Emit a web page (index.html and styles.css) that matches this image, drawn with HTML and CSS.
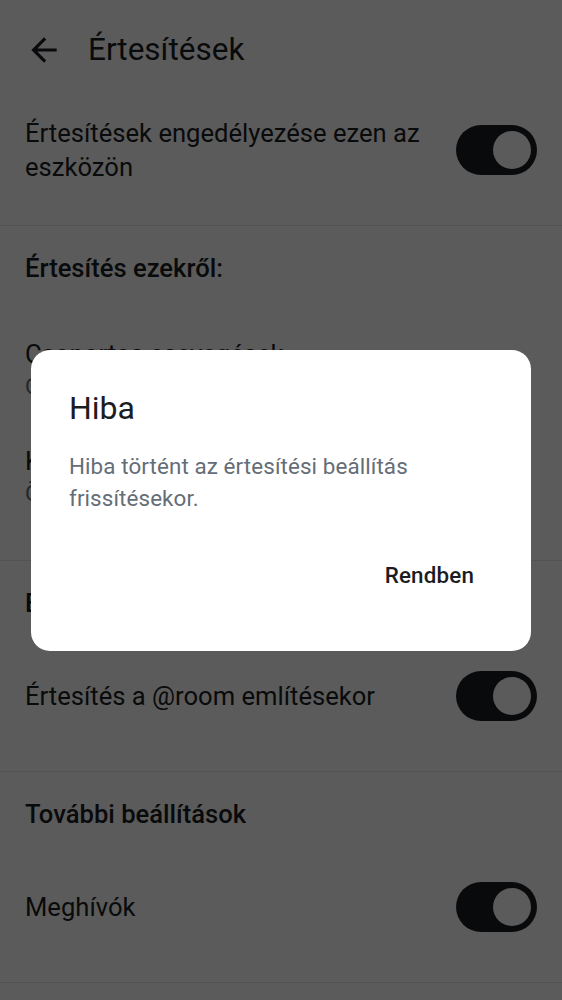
FILE: index.html
```html
<!DOCTYPE html>
<html lang="hu">
<head>
<meta charset="utf-8">
<title>Értesítések</title>
<link rel="stylesheet" href="styles.css">
</head>
<body>
<div class="screen">
  <header class="appbar">
    <span class="nav-icon">
      <svg viewBox="0 0 24 24" aria-hidden="true"><path d="M20 11H7.83l5.59-5.59L12 4l-8 8 8 8 1.41-1.41L7.83 13H20v-2z"/></svg>
    </span>
    <h1 class="appbar-title">Értesítések</h1>
  </header>

  <section class="section section-first">
    <div class="row row-toggle row-first">
      <span class="row-title">Értesítések engedélyezése ezen az eszközön</span>
      <span class="switch"><span class="thumb"></span></span>
    </div>
  </section>

  <section class="section">
    <h2 class="section-header">Értesítés ezekről:</h2>
    <div class="row row-two">
      <div class="row-title">Csoportos csevegések</div>
      <div class="row-sub">Csak említések és kulcsszavak</div>
    </div>
    <div class="row row-two">
      <div class="row-title">Közvetlen csevegések</div>
      <div class="row-sub">Összes üzenet</div>
    </div>
  </section>

  <section class="section">
    <h2 class="section-header">Említések</h2>
    <div class="row row-toggle">
      <span class="row-title">Értesítés a @room említésekor</span>
      <span class="switch"><span class="thumb"></span></span>
    </div>
  </section>

  <section class="section">
    <h2 class="section-header">További beállítások</h2>
    <div class="row row-toggle">
      <span class="row-title">Meghívók</span>
      <span class="switch"><span class="thumb"></span></span>
    </div>
  </section>
</div>

<div class="scrim">
  <div class="dialog" role="alertdialog" aria-labelledby="dlg-title">
    <h2 class="dialog-title" id="dlg-title">Hiba</h2>
    <p class="dialog-body">Hiba történt az értesítési beállítás frissítésekor.</p>
    <div class="dialog-actions">
      <button class="text-button" type="button">Rendben</button>
    </div>
  </div>
</div>
</body>
</html>
```

FILE: styles.css
```css
* {
  box-sizing: border-box;
}

html, body {
  margin: 0;
  padding: 0;
}

body {
  font-family: Roboto, "Noto Sans", "Liberation Sans", sans-serif;
  background: #ffffff;
  color: #1b1d22;
}

.screen {
  width: 562px;
  min-height: 1000px;
  overflow: hidden;
}

/* Top app bar */
.appbar {
  height: 100px;
  display: flex;
  align-items: center;
  gap: 25px;
  padding-left: 25px;
}

.nav-icon {
  width: 38px;
  height: 38px;
  display: flex;
}

.nav-icon svg {
  width: 38px;
  height: 38px;
  fill: #1b1d22;
}

.appbar-title {
  margin: 0;
  font-size: 31.5px;
  font-weight: 400;
  line-height: 40px;
}

/* Sections */
.section {
  border-bottom: 1px solid #e6e9ed;
  padding-bottom: 30px;
}

.section-first {
  padding-bottom: 25px;
}

.section-header {
  margin: 0 0 30px;
  padding: 25px 25px 0;
  font-size: 25.6px;
  font-weight: 500;
  line-height: 35px;
}

.row {
  padding: 0 25px;
}

.row-title {
  font-size: 25.6px;
  line-height: 35px;
}

.row-toggle {
  display: flex;
  align-items: center;
  justify-content: space-between;
  gap: 24px;
  padding-top: 20px;
  padding-bottom: 20px;
}

.row-first {
  padding-top: 16px;
  padding-bottom: 16px;
}

.row-first .row-title {
  line-height: 34px;
}

.row-toggle .row-title {
  flex: 1;
}

.row-two {
  padding-top: 22px;
  padding-bottom: 22px;
  display: flex;
  flex-direction: column;
}

.row-two .row-title {
  line-height: 33px;
}

.row-sub {
  font-size: 22.4px;
  line-height: 30px;
  color: #656d77;
}

/* Switch */
.switch {
  flex: none;
  width: 81px;
  height: 50px;
  border-radius: 25px;
  background: #1b1d22;
  display: flex;
  align-items: center;
  justify-content: flex-end;
  padding-right: 6px;
}

.thumb {
  width: 38px;
  height: 38px;
  border-radius: 50%;
  background: #ffffff;
}

/* Scrim + dialog */
.scrim {
  position: fixed;
  inset: 0;
  background: rgba(0, 0, 0, 0.643);
  display: flex;
  align-items: center;
  justify-content: center;
}

.dialog {
  width: 500px;
  background: #ffffff;
  border-radius: 19px;
  padding: 38px 38px 52px;
}

.dialog-title {
  margin: 0;
  font-size: 32px;
  font-weight: 400;
  line-height: 40px;
  color: #1b1d22;
}

.dialog-body {
  margin: 22px 0 0;
  font-size: 22.4px;
  line-height: 32px;
  letter-spacing: 0.1px;
  color: #656d77;
}

.dialog-actions {
  margin-top: 37px;
  display: flex;
  justify-content: flex-end;
}

.text-button {
  height: 48px;
  padding: 0 19px;
  border: 0;
  background: transparent;
  font-family: inherit;
  font-size: 22.4px;
  font-weight: 500;
  letter-spacing: 0.16px;
  color: #1b1d22;
  line-height: 48px;
}
```
